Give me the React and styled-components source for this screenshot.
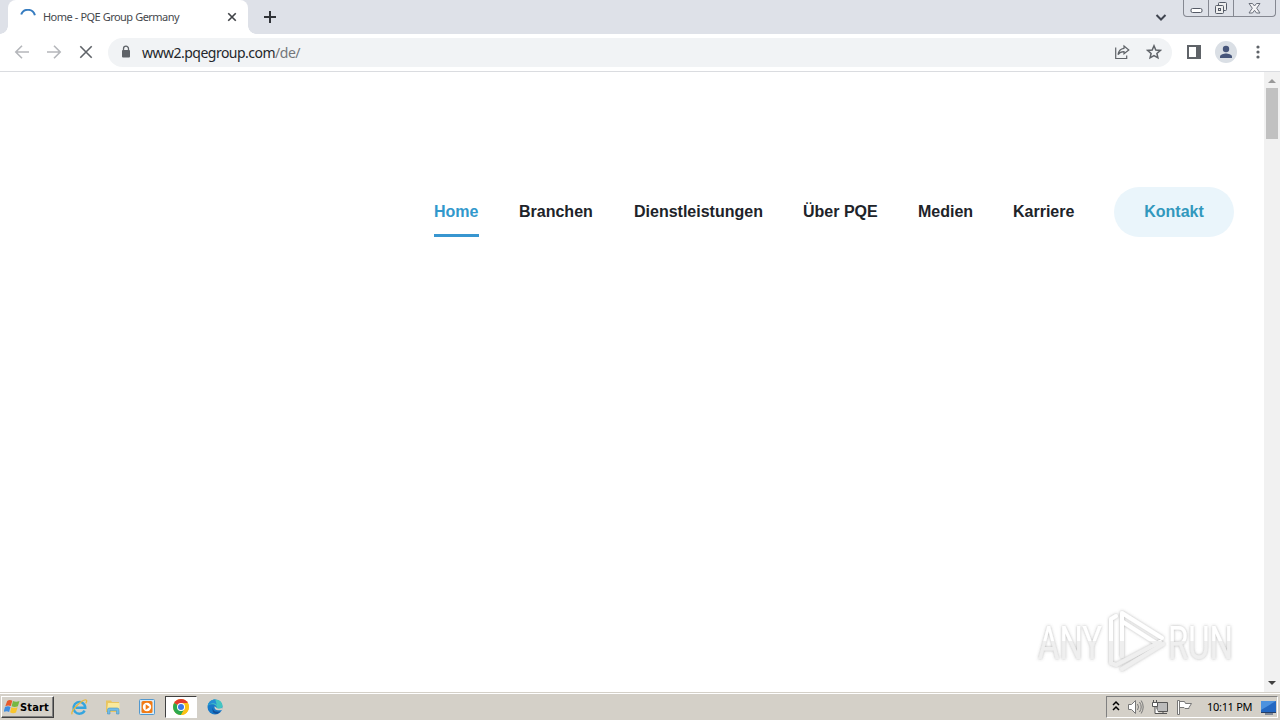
import React from 'react';
import styled, { createGlobalStyle } from 'styled-components';

const GlobalStyle = createGlobalStyle`
  * {
    box-sizing: border-box;
  }
  body {
    margin: 0;
    overflow: hidden;
    background: #fff;
    font-family: "Noto Sans", sans-serif;
  }
  svg {
    display: block;
    flex-shrink: 0;
  }
`

const Screen = styled.div`
  width: 1280px;
  height: 720px;
  display: flex;
  flex-direction: column;
  overflow: hidden;
`

const TabStrip = styled.div`
  height: 34px;
  flex-shrink: 0;
  display: flex;
  align-items: flex-start;
  background: #dee1e8;
`

const TabCorner = styled.div`
  width: 8px;
  height: 34px;
  background: radial-gradient(circle at ${props => props.$side} 0, #dee1e8 7.5px, #fff 8px) no-repeat 0 26px / 8px 8px;
`

const Tab = styled.div`
  width: 240px;
  height: 34px;
  display: flex;
  align-items: center;
  padding: 0 10px 0 12px;
  background: #fff;
  border-radius: 8px 8px 0 0;
`

const TabTitle = styled.span`
  flex: 1;
  margin-left: 7px;
  color: #45484c;
  font-size: 11px;
  line-height: 16px;
  letter-spacing: -0.54px;
  word-spacing: 0.3px;
  white-space: nowrap;
`

const NewTab = styled.div`
  height: 34px;
  display: flex;
  align-items: center;
  margin-left: 7px;
`

const TabSearch = styled.div`
  height: 34px;
  display: flex;
  align-items: center;
  margin-left: auto;
  margin-right: 14px;
`

const WindowButtons = styled.div`
  width: 93px;
  height: 17px;
  display: flex;
  margin-right: 4px;
  border: 1px solid #858891;
  border-top: 0;
  border-radius: 0 0 4px 4px;
`

const WindowButton = styled.div`
  width: ${props => props.$width}px;
  display: flex;
  align-items: center;
  justify-content: center;
  & + & {
    border-left: 1px solid #858891;
  }
`

const Toolbar = styled.div`
  height: 38px;
  flex-shrink: 0;
  display: flex;
  align-items: center;
  padding: 0 11px 1px 14px;
  background: #fff;
  border-bottom: 1px solid #dadce0;
`

const NavButtons = styled.div`
  display: flex;
  gap: 16px;
`

const AddressBar = styled.div`
  width: 1064px;
  height: 29px;
  flex-shrink: 0;
  display: flex;
  align-items: center;
  margin-left: 14px;
  padding: 0 10px;
  border-radius: 15px;
  background: #f1f3f5;
`

const Url = styled.span`
  flex: 1;
  margin-left: 8px;
  padding-top: 1px;
  color: #24272b;
  font-size: 14px;
  line-height: 20px;
  letter-spacing: -0.51px;
  white-space: nowrap;
`

const UrlPath = styled.span`
  color: #74777b;
`

const AddressActions = styled.div`
  display: flex;
  gap: 16px;
`

const ToolbarActions = styled.div`
  display: flex;
  align-items: center;
  gap: 13px;
  margin-left: 14px;
`

const Page = styled.div`
  height: 620px;
  flex-shrink: 0;
  display: flex;
  background: #fff;
`

const Content = styled.main`
  position: relative;
  flex: 1;
`

const Menu = styled.nav`
  display: flex;
  justify-content: flex-end;
  align-items: flex-start;
  gap: 40px;
  padding: 115px 30px 0 0;
  font-family: "Liberation Sans", Arial, sans-serif;
  font-size: 16px;
  font-weight: 700;
  line-height: 49px;
  white-space: nowrap;
`

const MenuItem = styled.a`
  width: ${props => props.$width}px;
  height: 50px;
  color: ${props => (props.$active ? '#3298cc' : '#202329')};
  border-bottom: 3px solid ${props => (props.$active ? '#3896d0' : 'transparent')};
`

const ContactButton = styled.a`
  width: 120px;
  height: 50px;
  border-radius: 25px;
  background: #eaf5fb;
  color: #3298bd;
  text-align: center;
`

const Watermark = styled.div`
  position: absolute;
  left: 1032px;
  top: 530px;
`

const Scrollbar = styled.div`
  width: 16px;
  display: flex;
  flex-direction: column;
  align-items: center;
  background: #f1f1f1;
`

const Thumb = styled.div`
  width: 12px;
  height: 51px;
  margin-bottom: auto;
  background: #c1c1c1;
`

const Taskbar = styled.div`
  height: 28px;
  flex-shrink: 0;
  display: flex;
  align-items: center;
  padding: 1px 2px 0 1px;
  background: #d4d0c8;
  border-top: 1px solid #d4d0c8;
  box-shadow: inset 0 1px #fff;
`

const StartButton = styled.div`
  width: 53px;
  height: 22px;
  display: flex;
  align-items: center;
  padding-left: 2px;
  border: 1px solid;
  border-color: #fff #404040 #404040 #fff;
  box-shadow: inset -1px -1px #808080;
  font-family: "DejaVu Sans Condensed", "DejaVu Sans", sans-serif;
  font-size: 11px;
  font-weight: 700;
  font-stretch: condensed;
  letter-spacing: 0.15px;
`

const QuickLaunch = styled.div`
  display: flex;
  align-items: center;
  margin-left: 8px;
`

const TaskButton = styled.div`
  width: ${props => (props.$active ? 32 : 34)}px;
  height: 22px;
  margin: ${props => (props.$active ? '0 1px' : 0)};
  display: flex;
  align-items: center;
  justify-content: center;
  background: ${props => (props.$active ? '#fff' : 'none')};
  border: ${props => (props.$active ? '1px solid' : 0)};
  border-color: #404040 #fff #fff #404040;
`

const Tray = styled.div`
  width: 172px;
  height: 22px;
  display: flex;
  align-items: center;
  margin-left: auto;
  padding-left: 5px;
  border: 1px solid;
  border-color: #808080 #fff #fff #808080;
`

const TrayIcons = styled.div`
  display: flex;
  align-items: center;
  gap: 8px;
  margin-left: 7px;
`

const Clock = styled.span`
  width: 45px;
  margin: 0 8px 0 14px;
  font-size: 11px;
  line-height: 14px;
  letter-spacing: -0.3px;
  padding-bottom: 1px;
  white-space: nowrap;
`

const MENU = [
  { name: 'Home', width: 45, active: true },
  { name: 'Branchen', width: 75 },
  { name: 'Dienstleistungen', width: 129 },
  { name: 'Über PQE', width: 75 },
  { name: 'Medien', width: 55 },
  { name: 'Karriere', width: 61 },
]

const Stroke = ({ d, size = 16, color = '#5f6368', width = 1.6 }) => (
  <svg width={size} height={size} viewBox="0 0 16 16" fill="none" stroke={color} strokeWidth={width}>
    <path d={d} />
  </svg>
)

const LockIcon = () => (
  <svg width="16" height="16" viewBox="0 0 16 16">
    <path d="M5.5 7V4.7a2.5 2.5 0 0 1 5 0V7" fill="none" stroke="#5f6368" strokeWidth="1.3" />
    <rect x="4" y="6" width="8" height="7.5" rx="1" fill="#5f6368" />
  </svg>
)

const PanelIcon = () => (
  <svg width="16" height="16">
    <path d="M1 1h14v14H1z" fill="#5f6368" />
    <path d="M3 3h7v10H3z" fill="#fff" />
  </svg>
)

const AvatarIcon = () => (
  <svg width="22" height="22" viewBox="0 0 22 22">
    <circle cx="11" cy="11" r="11" fill="#dadfe5" />
    <circle cx="11" cy="8" r="3.2" fill="#46557a" />
    <path d="M5 17v-1.5c0-2 4-3 6-3s6 1 6 3V17z" fill="#46557a" />
  </svg>
)

const DotsIcon = () => (
  <svg width="16" height="16" fill="#5f6368">
    <circle cx="8" cy="3" r="1.6" />
    <circle cx="8" cy="8" r="1.6" />
    <circle cx="8" cy="13" r="1.6" />
  </svg>
)

const WindowsIcon = () => (
  <svg width="16" height="16" viewBox="0 0 16 16">
    <path d="M3.2 2Q5.5 .2 8.3 1.7L6.8 7Q4 5.7 1.3 7.2z" fill="#e75a2b" />
    <path d="M9 2Q12 3.5 15.5 2L13.9 7.3Q10.5 8.7 7.6 7.2z" fill="#76b843" />
    <path d="M1 8Q4 6.6 6.5 7.9L5.1 13Q2.7 11.6 -.4 13z" fill="#3f8de0" />
    <path d="M7.4 8.2Q10.3 9.5 13.6 8.2L12 13.5Q9 15 6.1 13.3z" fill="#f8c52d" />
  </svg>
)

const ExplorerIcon = () => (
  <svg width="18" height="18" viewBox="0 0 18 18" fill="none">
    <path d="M14.6 12.6A5.9 5.9 0 1 1 15.3 9.7H5.5" stroke="#35a5df" strokeWidth="2.4" />
    <path d="M2.3 16.2C-.8 14.2 12.5 .6 16.2 2c1 .5.4 2.2-.5 3.4" stroke="#e7b83e" strokeWidth="1.3" />
  </svg>
)

const FolderIcon = () => (
  <svg width="18" height="18" viewBox="0 0 18 18">
    <path d="M2 2.5h5l1 1.5h7V14H2z" fill="#e9c560" />
    <path d="M4 5h11.5v8H3z" fill="#fae99c" />
    <path d="M3.5 16v-4.2q0-1.8 1.8-1.8h7.9q1.8 0 1.8 1.8V16h-2.5v-3.5H6V16z" fill="#71bce8" stroke="#4c94bf" strokeWidth=".6" />
  </svg>
)

const MediaIcon = () => (
  <svg width="16" height="16" viewBox="0 0 16 16">
    <rect x=".5" y=".5" width="15" height="15" rx="1" fill="#d6ecfa" stroke="#5298ce" />
    <rect x="2.5" y="2" width="11" height="12" rx="1.5" fill="#f17b15" />
    <circle cx="8" cy="8" r="4.2" fill="#fff" />
    <path d="M6.7 5.3v5.4l4-2.7z" fill="#f17b15" />
  </svg>
)

const ChromeIcon = () => (
  <svg width="16" height="16" viewBox="0 0 16 16">
    <circle cx="8" cy="8" r="8" fill="#fbc116" />
    <path d="M8 8L1.1 4A8 8 0 0 1 14.9 4z" fill="#e33b2e" />
    <path d="M8 8L1.1 4A8 8 0 0 0 8 16l3.5-6z" fill="#2da94f" />
    <path d="M8 4h6.9A8 8 0 0 1 8 16l3.5-6z" fill="#fbc116" />
    <circle cx="8" cy="8" r="4" fill="#fff" />
    <circle cx="8" cy="8" r="3" fill="#3b78e7" />
  </svg>
)

const EdgeIcon = () => (
  <svg width="16" height="16" viewBox="0 0 17 17">
    <circle cx="8.5" cy="8.5" r="8" fill="#1879c9" />
    <path d="M.7 7.2C1.8 2.7 5 .5 8.8.5c4.5 0 7.7 3 7.7 6.8 0 3.6-4.5 4.2-6.1 2.9.8-3.8-4.8-6.6-9.7-3z" fill="#43c5c2" />
    <path d="M10.7 7.5C9.8 3.5 4 3.7.7 7.2 1.8 2.7 5 .5 8.8.5z" fill="#258fd5" />
    <path d="M6.3 8.8c-.6 4 3.4 6.1 7.8 4.1C11 17.5 4 16.3 6.3 8.8z" fill="#134f99" />
    <path d="M8.2 7.6c-1.2 3.2 2.5 5.4 7.6 4l1.2-2.8c-2.1 1.8-5.6 2-6.5.8z" fill="#d4d0c8" />
  </svg>
)

const SpeakerIcon = () => (
  <svg width="17" height="16" viewBox="0 0 17 16" fill="none" stroke="#777">
    <path d="M1.5 5.5h3l4-4v13l-4-4h-3z" fill="#fff" />
    <path d="M10.5 5q2 3 0 6M12.5 3q3.4 5 0 10M14.2 1.5q4 6.5 0 13" />
  </svg>
)

const NetworkIcon = () => (
  <svg width="17" height="16" viewBox="0 0 17 16" fill="none" stroke="#555">
    <path d="M5 3.5h10.5v9H5zM7 14.5h8M11 12v2" fill="#bbb" />
    <path d="M1.5 1v3M4.5 1v3M.5 3.5h5v4h-5zM3 7.5v7h4" fill="#fff" />
  </svg>
)

const FlagIcon = () => (
  <svg width="16" height="16" viewBox="0 0 16 16" fill="#fff" stroke="#777">
    <path d="M.5 1.5v14h2v-14zM2.5 2.5h5l1 2h6l-2.5 4v1H8l-1-1H2.5z" />
  </svg>
)

const DesktopIcon = () => (
  <svg width="17" height="16" viewBox="0 0 17 16">
    <rect x="1" y="2" width="15" height="11" fill="#2468c2" />
    <path d="M1 2h15L1 11z" fill="#4d92df" />
    <path d="M1 13.5h15M5 15h8" stroke="#263f67" />
  </svg>
)

const LogoText = styled.text`
  font-family: Roboto, sans-serif;
  font-size: 47px;
  font-weight: 400;
`

const AnyRunLogo = () => (
  <svg width="230" height="80" viewBox="0 0 230 80">
    <defs>
      <linearGradient id="fade" gradientUnits="userSpaceOnUse" x1="0" y1="0" x2="0" y2="80">
        <stop offset=".49" stopColor="#fff" />
        <stop offset=".49" stopColor="#efefef" />
      </linearGradient>
      <filter id="glow" filterUnits="userSpaceOnUse" x="0" y="0" width="230" height="80">
        <feDropShadow dx="0" dy="0" stdDeviation="1.6" floodColor="#666" floodOpacity=".5" />
      </filter>
    </defs>
    <g filter="url(#glow)" fill="url(#fade)">
      <LogoText x="6" y="57" textLength="64" lengthAdjust="spacingAndGlyphs">ANY</LogoText>
      <LogoText x="136" y="57" textLength="65" lengthAdjust="spacingAndGlyphs">RUN</LogoText>
      <g fill="none" stroke="url(#fade)" strokeWidth="4" strokeLinejoin="round" strokeLinecap="round">
        <path d="M84 14L79 17V61L84 63L128 40" />
        <path d="M90 54V11L130 36" />
        <path d="M91 20L124 41" />
        <path d="M90 67L131 42" />
      </g>
    </g>
  </svg>
)

const App = () => {
  return (
    <>
      <GlobalStyle />
      <Screen>
        <TabStrip>
          <TabCorner $side="0" />
          <Tab>
            <Stroke d="M1.2 5.5A7.2 7.2 0 0 1 14.9 6.2" color="#367cc0" width={2} />
            <TabTitle>Home - PQE Group Germany</TabTitle>
            <Stroke d="M3 3l10 10M13 3L3 13" color="#404347" width={2.2} size={12} />
          </Tab>
          <TabCorner $side="8px" />
          <NewTab><Stroke d="M7 2v12M1 8h12" color="#303338" width={2} /></NewTab>
          <TabSearch><Stroke d="M3.5 6l4.5 4.5L12.5 6" color="#404550" width={2} /></TabSearch>
          <WindowButtons>
            <WindowButton $width={24}>
              <svg width="13" height="16"><rect x="1" y="8.5" width="11" height="4" rx="1.5" fill="#fff" stroke="#555a66" /></svg>
            </WindowButton>
            <WindowButton $width={25}>
              <svg width="14" height="16" fill="#eee" stroke="#555b67">
                <rect x="4.5" y="2.5" width="8" height="8" rx="1" />
                <rect x="1.5" y="5.5" width="8" height="8" rx="1" />
                <rect x="4.5" y="8.5" width="2" height="2" />
              </svg>
            </WindowButton>
            <WindowButton $width={42}>
              <svg width="13" height="16"><path d="M1 3.5h3.5l2 2.5 2-2.5H12L8.7 8.2 12 13H8.5l-2-2.7-2 2.7H1l3.3-4.8z" fill="#f4f4f6" stroke="#6b707b" /></svg>
            </WindowButton>
          </WindowButtons>
        </TabStrip>
        <Toolbar>
          <NavButtons>
            <Stroke d="M15 8H2M8 1.8L1.8 8 8 14.2" color="#b5b7bb" />
            <Stroke d="M1 8h13M8 1.8L14.2 8 8 14.2" color="#b5b7bb" />
            <Stroke d="M2.3 2.3l11.4 11.4M13.7 2.3L2.3 13.7" />
          </NavButtons>
          <AddressBar>
            <LockIcon />
            <Url>www2.pqegroup.com<UrlPath>/de/</UrlPath></Url>
            <AddressActions>
              <Stroke d="M1.7 3.5v11h11v-3M10 2l4.8 4L10 9.8V7.7c-3 0-4.7 1-6 3 .5-3.6 2.6-6 6-6.4z" width={1.2} />
              <Stroke d="M8 1.8l1.8 4.2 4.5.4-3.4 3 1 4.4L8 11.5l-3.9 2.3 1-4.4-3.4-3 4.5-.4z" width={1.5} />
            </AddressActions>
          </AddressBar>
          <ToolbarActions>
            <PanelIcon />
            <AvatarIcon />
            <DotsIcon />
          </ToolbarActions>
        </Toolbar>
        <Page>
          <Content>
            <Menu>
              {MENU.map(item => <MenuItem key={item.name} $width={item.width} $active={item.active}>{item.name}</MenuItem>)}
              <ContactButton>Kontakt</ContactButton>
            </Menu>
            <Watermark><AnyRunLogo /></Watermark>
          </Content>
          <Scrollbar>
            <svg width="16" height="16"><path d="M4 11l4-4 4 4z" fill="#999" /></svg>
            <Thumb />
            <svg width="16" height="17"><path d="M4 6l4 4 4-4z" fill="#404040" /></svg>
          </Scrollbar>
        </Page>
        <Taskbar>
          <StartButton>
            <WindowsIcon />
            Start
          </StartButton>
          <QuickLaunch>
            <TaskButton><ExplorerIcon /></TaskButton>
            <TaskButton><FolderIcon /></TaskButton>
            <TaskButton><MediaIcon /></TaskButton>
            <TaskButton $active><ChromeIcon /></TaskButton>
            <TaskButton><EdgeIcon /></TaskButton>
          </QuickLaunch>
          <Tray>
            <svg width="8" height="14" fill="none" stroke="#000" strokeWidth="1.5"><path d="M1 5l3-3 3 3M1 10l3-3 3 3" /></svg>
            <TrayIcons>
              <SpeakerIcon />
              <NetworkIcon />
              <FlagIcon />
            </TrayIcons>
            <Clock>10:11 PM</Clock>
            <DesktopIcon />
          </Tray>
        </Taskbar>
      </Screen>
    </>
  );
}

export default App;
